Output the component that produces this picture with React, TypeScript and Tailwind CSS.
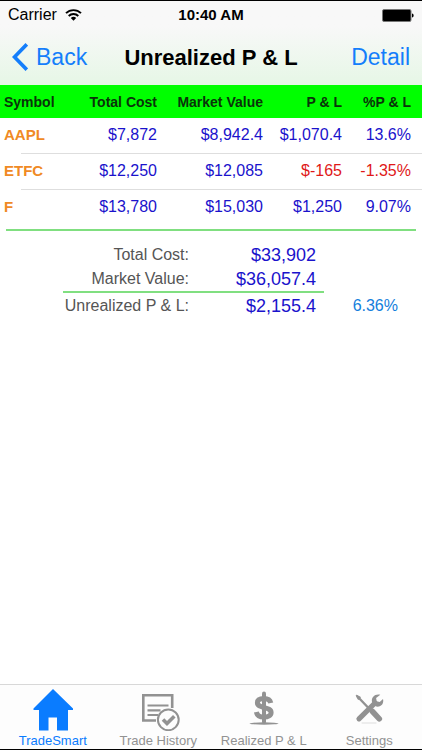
import { useState } from 'react';
import type { ReactNode } from 'react';
import { clsx } from 'clsx';

type Position = {
    symbol: string;
    cost: string;
    value: string;
    gain: string;
    percent: string;
    loss?: boolean;
};

const positions: Position[] = [
    { symbol: 'AAPL', cost: '$7,872', value: '$8,942.4', gain: '$1,070.4', percent: '13.6%' },
    { symbol: 'ETFC', cost: '$12,250', value: '$12,085', gain: '$-165', percent: '-1.35%', loss: true },
    { symbol: 'F', cost: '$13,780', value: '$15,030', gain: '$1,250', percent: '9.07%' },
];

function WifiIcon() {
    return (
        <svg width="17" height="12" viewBox="0 0 17 12" fill="none" stroke="#000" strokeWidth="1.9" aria-hidden="true">
            <path d="M1 4.2a10.6 10.6 0 0 1 15 0" />
            <path d="M3.7 7a6.8 6.8 0 0 1 9.6 0" />
            <path d="M8.5 11.8 5.8 9.1a3.8 3.8 0 0 1 5.4 0z" fill="#000" stroke="none" />
        </svg>
    );
}

function BatteryIcon() {
    return (
        <svg width="32" height="13" viewBox="0 0 32 13" aria-hidden="true">
            <rect x="0.5" y="0.5" width="28.5" height="12" rx="1.5" fill="#000" stroke="#777" />
            <path d="M30 4.5c2.2.4 2.2 3.6 0 4z" fill="#000" />
        </svg>
    );
}

// Tab icons share one 44x42 box so their labels line up
function HomeIcon() {
    return (
        <svg width="44" height="42" viewBox="0 0 44 42" fill="currentColor" aria-hidden="true">
            <path d="M22 0 42 19.5V21h-5v20.500H26V28.500h-8.500v13H8V21H2.500v-1.500z" />
        </svg>
    );
}

function HistoryIcon() {
    return (
        <svg width="44" height="42" viewBox="0 0 44 42" fill="none" stroke="currentColor" aria-hidden="true">
            <path d="M20 31.500H7.300V6.300H36.200V19" strokeWidth="2.600" />
            <path d="M11.500 16.500h21M11.500 21.300h13M11.500 26h10.500" strokeWidth="2.200" />
            <circle cx="32.300" cy="30.800" r="10.400" strokeWidth="2" />
            <path d="m27 30.500 4 4 7.300-7.300" strokeWidth="3.600" />
        </svg>
    );
}

function DollarIcon() {
    return (
        <svg width="44" height="42" viewBox="0 0 44 42" fill="none" stroke="currentColor" aria-hidden="true">
            <path d="M22 4.500v28.500" strokeWidth="4" strokeLinecap="round" />
            <path
                d="M28.800 14C28 10.800 25.700 9.500 22 9.500c-4.100 0-6.600 1.600-6.600 4.300 0 3.100 3 3.800 6.600 4.700s7.100 1.700 7.100 5c0 3-3 4.600-7.100 4.600-4.200 0-6.900-1.700-7.600-5.200"
                strokeWidth="5"
            />
            <ellipse cx="22" cy="34.500" rx="14.500" ry="1.200" fill="currentColor" stroke="none" />
        </svg>
    );
}

function ToolsIcon() {
    return (
        <svg width="44" height="42" viewBox="0 0 44 42" fill="none" stroke="currentColor" strokeLinecap="round" aria-hidden="true">
            <path d="M15 34h14" strokeWidth="1" opacity="0.3" />
            <path d="m10.500 7.500 11 11.500" strokeWidth="2.400" />
            <path d="m9.500 6.300 4 2-2 2z" fill="currentColor" strokeWidth="1" />
            <path d="m25.500 22.500 6.800 7.300" strokeWidth="5.600" />
            <path d="m12 29.800 16-15.800" strokeWidth="5.200" />
            <path
                d="M33.300 5.800c-5-1.300-9.300 2.200-8.300 7.200l4 4.500c5 1 8.200-2.800 7-7.500l-3.300 3-3-.8-.6-3.200z"
                fill="currentColor"
                stroke="none"
            />
        </svg>
    );
}

const tabs: { label: string; icon: ReactNode }[] = [
    { label: 'TradeSmart', icon: <HomeIcon /> },
    { label: 'Trade History', icon: <HistoryIcon /> },
    { label: 'Realized P & L', icon: <DollarIcon /> },
    { label: 'Settings', icon: <ToolsIcon /> },
];

export default function App() {
    const [activeTab, setActiveTab] = useState('TradeSmart');

    return (
        <div className="flex min-h-screen flex-col border-y border-black bg-white font-['Liberation_Sans',Arial,sans-serif] text-black">
            <header className="bg-linear-to-b from-[#f8f8f8] from-30% to-[#e6f7e6]">
                {/* Status bar */}
                <div className="grid h-7 grid-cols-3 items-center px-2">
                    <div className="flex items-center gap-2 text-base">
                        Carrier
                        <WifiIcon />
                    </div>
                    <div className="text-center text-[15px] font-bold">10:40 AM</div>
                    <div className="flex justify-end">
                        <BatteryIcon />
                    </div>
                </div>

                {/* Navigation bar */}
                <nav className="grid h-14 grid-cols-[1fr_auto_1fr] items-center px-3">
                    <button type="button" className="flex items-center gap-2 text-[23px] text-[#147efb]">
                        <svg width="16" height="28" viewBox="0 0 16 28" fill="none" stroke="currentColor" strokeWidth="3.600" aria-hidden="true">
                            <path d="M14.800 1.300 2.500 14l12.300 12.700" />
                        </svg>
                        Back
                    </button>
                    <h1 className="text-[22px] font-bold">Unrealized P &amp; L</h1>
                    <button type="button" className="text-right text-[23px] text-[#147efb]">
                        Detail
                    </button>
                </nav>
            </header>

            <main className="flex-1">
                <table className="w-full table-fixed text-right">
                    <colgroup>
                        <col />
                        <col className="w-[100px]" />
                        <col className="w-[106px]" />
                        <col className="w-[79px]" />
                        <col className="w-[80px]" />
                    </colgroup>
                    <thead className="bg-[#00ff00] text-sm text-[#0a330a]">
                        <tr className="h-[33px]">
                            <th className="pl-1 text-left">Symbol</th>
                            <th>Total Cost</th>
                            <th>Market Value</th>
                            <th>P &amp; L</th>
                            <th className="pr-[11px]">%P &amp; L</th>
                        </tr>
                    </thead>
                    <tbody className="text-base text-[#1a12cc]">
                        {positions.map((p) => (
                            <tr
                                key={p.symbol}
                                className="h-9 bg-[linear-gradient(#dedede,#dedede)] bg-[length:calc(100%-21px)_1px] bg-right-bottom bg-no-repeat last:bg-none"
                            >
                                <th className="pb-0.5 pl-1 text-left text-[15px] font-bold text-[#f08a24]">{p.symbol}</th>
                                <td className="pb-0.5">{p.cost}</td>
                                <td className="pb-0.5">{p.value}</td>
                                <td className={clsx('pb-0.5', p.loss && 'text-[#e01818]')}>{p.gain}</td>
                                <td className={clsx('pr-[11px] pb-0.5', p.loss && 'text-[#e01818]')}>{p.percent}</td>
                            </tr>
                        ))}
                    </tbody>
                </table>

                <hr className="mx-1.5 mt-[3px] border-t-2 border-[#80df80]" />

                {/* Totals */}
                <div className="mt-3 mr-6 ml-auto grid w-fit grid-cols-[126px_135px_74px] text-right text-base/6 text-[#555]">
                    <span>Total Cost:</span>
                    <span className="pr-2 text-lg/6 text-[#1a12cc]">$33,902</span>
                    <span />
                    <span>Market Value:</span>
                    <span className="pr-2 text-lg/6 text-[#1a12cc]">$36,057.4</span>
                    <span />
                    <hr className="col-span-2 mb-px border-t-2 border-[#80df80]" />
                    <span />
                    <span>Unrealized P &amp; L:</span>
                    <span className="pr-2 text-lg/6 text-[#1a12cc]">$2,155.4</span>
                    <span className="text-[#147edc]">6.36%</span>
                </div>
            </main>

            <nav className="grid grid-cols-4 border-t border-[#d8d8d8] bg-[#fdfdfd]">
                {tabs.map((tab) => (
                    <button
                        key={tab.label}
                        type="button"
                        onClick={() => setActiveTab(tab.label)}
                        className={clsx(
                            'flex h-16 flex-col items-center whitespace-nowrap text-[13px]/4',
                            activeTab === tab.label ? 'text-[#0a7cff]' : 'text-[#929292]'
                        )}
                    >
                        <span className="h-12 pt-1">{tab.icon}</span>
                        {tab.label}
                    </button>
                ))}
            </nav>
        </div>
    );
}
